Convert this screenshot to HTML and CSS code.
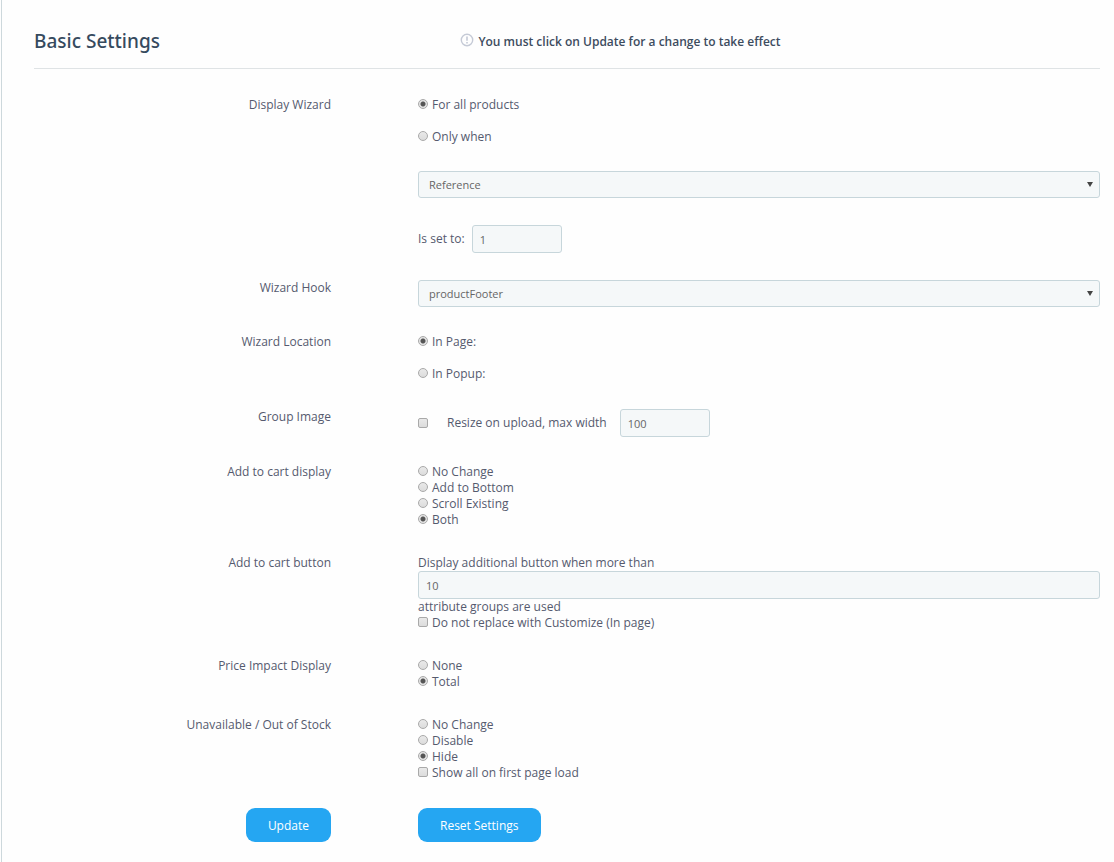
FILE: index.html
```html
<!DOCTYPE html>
<html lang="en">
<head>
    <meta charset="UTF-8">
    <meta name="viewport" content="width=device-width, initial-scale=1.0">
    <title>Basic Settings</title>
    <link rel="stylesheet" href="styles.css">
</head>
<body>
    <div class="panel">
        <div class="panel-header">
            <h1>Basic Settings</h1>
            <p class="notice">
                <svg class="notice-icon" width="14" height="14" viewBox="0 0 14 14" aria-hidden="true">
                    <circle cx="7" cy="7" r="5.7" fill="none" stroke="#c5cad6" stroke-width="1.4"/>
                    <path d="M7 3.4v4.3M7 9v1.5" stroke="#c5cad6" stroke-width="1.6"/>
                </svg>
                You must click on Update for a change to take effect
            </p>
        </div>

        <form class="settings">
            <div class="row" role="group" aria-labelledby="display-label">
                <span class="row-label" id="display-label">Display Wizard</span>
                <div class="field">
                    <div class="choices spaced">
                        <label class="choice"><input type="radio" name="display" value="all" checked> For all products</label>
                        <label class="choice"><input type="radio" name="display" value="when"> Only when</label>
                    </div>
                    <div class="select-wrap condition">
                        <select name="condition" aria-label="Only when">
                            <option>Reference</option>
                        </select>
                    </div>
                    <div class="inline">
                        <label for="setTo">Is set to:</label>
                        <input class="small" type="text" id="setTo" name="setTo" value="1">
                    </div>
                </div>
            </div>

            <div class="row">
                <label class="row-label" for="hook">Wizard Hook</label>
                <div class="field">
                    <div class="select-wrap">
                        <select id="hook" name="hook">
                            <option>productFooter</option>
                        </select>
                    </div>
                </div>
            </div>

            <div class="row" role="group" aria-labelledby="location-label">
                <span class="row-label" id="location-label">Wizard Location</span>
                <div class="field choices spaced">
                    <label class="choice"><input type="radio" name="location" value="page" checked> In Page:</label>
                    <label class="choice"><input type="radio" name="location" value="popup"> In Popup:</label>
                </div>
            </div>

            <div class="row" role="group" aria-labelledby="image-label">
                <span class="row-label" id="image-label">Group Image</span>
                <div class="field resize">
                    <input type="checkbox" id="resize" name="resize">
                    <label for="resize">Resize on upload, max width</label>
                    <input class="small" type="text" name="maxWidth" value="100" aria-label="Max width">
                </div>
            </div>

            <div class="row" role="group" aria-labelledby="cart-label">
                <span class="row-label" id="cart-label">Add to cart display</span>
                <div class="field choices">
                    <label class="choice"><input type="radio" name="cart" value="none"> No Change</label>
                    <label class="choice"><input type="radio" name="cart" value="bottom"> Add to Bottom</label>
                    <label class="choice"><input type="radio" name="cart" value="scroll"> Scroll Existing</label>
                    <label class="choice"><input type="radio" name="cart" value="both" checked> Both</label>
                </div>
            </div>

            <div class="row" role="group" aria-labelledby="button-label">
                <span class="row-label" id="button-label">Add to cart button</span>
                <div class="field choices">
                    <label for="groups">Display additional button when more than</label>
                    <input type="text" id="groups" name="groups" value="10">
                    <span>attribute groups are used</span>
                    <label class="choice"><input type="checkbox" name="noReplace"> Do not replace with Customize (In page)</label>
                </div>
            </div>

            <div class="row" role="group" aria-labelledby="price-label">
                <span class="row-label" id="price-label">Price Impact Display</span>
                <div class="field choices">
                    <label class="choice"><input type="radio" name="price" value="none"> None</label>
                    <label class="choice"><input type="radio" name="price" value="total" checked> Total</label>
                </div>
            </div>

            <div class="row" role="group" aria-labelledby="stock-label">
                <span class="row-label" id="stock-label">Unavailable / Out of Stock</span>
                <div class="field choices">
                    <label class="choice"><input type="radio" name="stock" value="none"> No Change</label>
                    <label class="choice"><input type="radio" name="stock" value="disable"> Disable</label>
                    <label class="choice"><input type="radio" name="stock" value="hide" checked> Hide</label>
                    <label class="choice"><input type="checkbox" name="showAll"> Show all on first page load</label>
                </div>
            </div>

            <div class="row">
                <div class="row-label"><button type="submit">Update</button></div>
                <div class="field"><button type="reset">Reset Settings</button></div>
            </div>
        </form>
    </div>
</body>
</html>
```
FILE: styles.css
```css
* {
    margin: 0;
    padding: 0;
    box-sizing: border-box;
}

body {
    font-family: "Open Sans", sans-serif;
    font-size: 12px;
    line-height: 16px;
    color: #555a6e;
    background: #fefefe;
}

.panel {
    min-height: 100vh;
    margin-left: 1px;
    padding: 14px 14px 20px 32px;
    border-left: 1px solid #cdd8dc;
}

.panel-header {
    display: grid;
    grid-template-columns: 2fr 3fr;
    align-items: center;
    height: 55px;
    border-bottom: 1px solid #dfe3e5;
}

h1 {
    font-family: "Noto Sans", "Open Sans", sans-serif;
    font-size: 19px;
    font-weight: 500;
    line-height: 26px;
    color: #364a5e;
}

.notice {
    display: flex;
    gap: 4px;
    padding-top: 2px;
    font-weight: 600;
    line-height: 18px;
    color: #3d4c5e;
}

.settings {
    display: flex;
    flex-direction: column;
    gap: 27px;
    padding-top: 28px;
}

.row {
    display: grid;
    grid-template-columns: 297px 1fr;
    column-gap: 87px;
}

.row-label {
    text-align: right;
}

.choices {
    display: flex;
    flex-direction: column;
    align-items: flex-start;
}

.spaced {
    gap: 16px;
}

.choice {
    display: flex;
    gap: 4px;
}

input[type="radio"],
input[type="checkbox"] {
    appearance: none;
    flex: none;
    width: 10px;
    height: 10px;
    margin-top: 2px;
    border: 1px solid #a9a9a9;
    background: linear-gradient(#e9e9e9, #dcdcdc);
}

input[type="radio"] {
    border-radius: 50%;
}

input[type="checkbox"] {
    border-radius: 2px;
}

input[type="radio"]:checked {
    background: radial-gradient(circle, #555 2px, #e4e4e4 3px);
}

select,
input[type="text"] {
    display: block;
    width: 100%;
    height: 28px;
    padding: 0 7px;
    border: 1px solid #c7d6db;
    border-radius: 3px;
    background: #f5f8f9;
    color: #666;
    font-family: inherit;
    font-size: 11px;
}

select {
    appearance: none;
    height: 27px;
    padding: 0 10px;
}

input.small {
    width: 90px;
}

.select-wrap {
    display: grid;
    align-items: center;
}

.select-wrap select,
.select-wrap::after {
    grid-area: 1 / 1;
}

/* drop-down arrow */
.select-wrap::after {
    content: "";
    justify-self: end;
    margin-right: 7px;
    border: 3px solid transparent;
    border-top: 5px solid #444;
    border-bottom: 0;
    pointer-events: none;
}

.condition {
    margin: 26px 0 27px;
}

.inline {
    display: flex;
    align-items: center;
    gap: 7px;
}

.resize {
    display: flex;
    align-items: center;
}

.resize input[type="checkbox"] {
    margin-top: 0;
}

.resize label {
    margin: 0 13px 0 19px;
}

button {
    height: 34px;
    padding: 0 22px;
    border: none;
    border-radius: 9px;
    background: #25a6f2;
    color: #fff;
    font-family: inherit;
    font-size: 12px;
    cursor: pointer;
}

button:hover {
    background: #1b93da;
}
```
